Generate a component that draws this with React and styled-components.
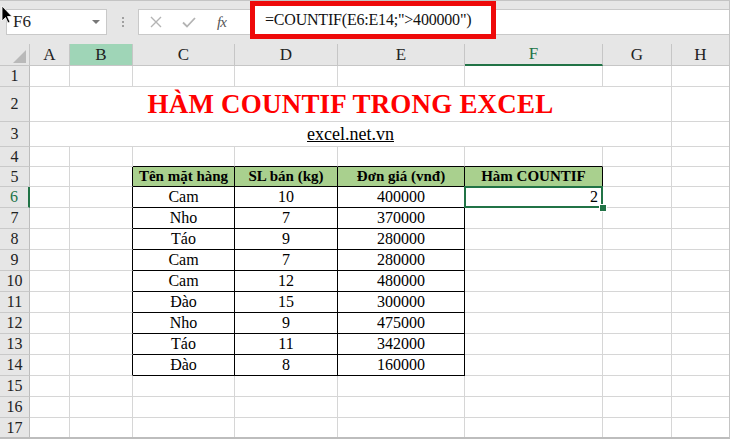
import styled, { createGlobalStyle, css } from 'styled-components';

const serif = '"Liberation Serif", "Times New Roman", "DejaVu Serif", serif';

const GlobalStyle = createGlobalStyle`
  html, body {
    margin: 0;
    padding: 0;
    background: #ffffff;
    overflow: hidden;
  }
  body, #root, #root * {
    font-family: ${serif};
  }
`;

const Window = styled.div`
  position: relative;
  width: 730px;
  height: 439px;
  overflow: hidden;
  box-sizing: border-box;
  border-top: 1px solid #c4c4c4;
  border-right: 1px solid #c4c4c4;
  border-bottom: 2px solid #bdbdbd;
  background: #ffffff;
  font-family: ${serif};
`;

const Toolbar = styled.div`
  height: 43px;
  background: #e6e6e6;
  display: flex;
  align-items: flex-start;
  padding-top: 8px;
  box-sizing: border-box;
`;

const NameBox = styled.div`
  margin-left: 6px;
  width: 101px;
  height: 26px;
  box-sizing: border-box;
  background: #fff;
  border: 1px solid #c9c9c9;
  display: flex;
  align-items: center;
  justify-content: space-between;
  padding: 0 6px 0 6px;
  font-family: ${serif};
  font-size: 17px;
  color: #222;
`;

const DropArrow = styled.span`
  width: 0;
  height: 0;
  border-left: 4px solid transparent;
  border-right: 4px solid transparent;
  border-top: 4px solid #777;
`;

const Dots = styled.div`
  width: 31px;
  height: 26px;
  display: flex;
  flex-direction: column;
  align-items: center;
  justify-content: center;
  gap: 2px;

  span {
    width: 2px;
    height: 2px;
    background: #a0a0a0;
  }
`;

const FormulaBar = styled.div`
  flex: 1;
  height: 26px;
  box-sizing: border-box;
  background: #fff;
  border: 1px solid #c9c9c9;
  border-right: none;
  display: flex;
  align-items: center;
`;

const IconButton = styled.span`
  width: 33px;
  display: flex;
  justify-content: center;
  align-items: center;
  color: ${(p) => p.$color || '#b4b4b4'};
`;

const Fx = styled.span`
  font-style: italic;
  font-size: 15px;
  color: #555;
  font-family: ${serif};
  letter-spacing: -1px;
`;

const Highlight = styled.div`
  margin-left: 12px;
  margin-top: -4px;
  width: 246px;
  height: 38px;
  box-sizing: border-box;
  border: 5px solid #ee0a0a;
  background: #fff;
  display: flex;
  align-items: center;
  padding-left: 10px;
  font-family: ${serif};
  font-size: 16px;
  letter-spacing: -0.2px;
  color: #111;
  white-space: nowrap;
`;

const Sheet = styled.div`
  display: grid;
  grid-template-columns: 30px 40px 63px 102px 103px 127px 138px 69px 58px;
  grid-template-rows: 22px 21px 35px 25px 20px 20px repeat(12, 21px);
`;

const Corner = styled.div`
  background: #e6e6e6;
  border-right: 1px solid #c6c6c6;
  border-bottom: 1px solid #c6c6c6;
  display: flex;
  align-items: flex-end;
  justify-content: flex-end;
  padding: 0 3px 2px 0;

  span {
    width: 0;
    height: 0;
    border-left: 13px solid transparent;
    border-bottom: 13px solid #b9b9b9;
  }
`;

const ColHead = styled.div`
  background: ${(p) => (p.$marked ? '#9fd5b7' : '#e6e6e6')};
  border-right: 1px solid #c6c6c6;
  border-bottom: ${(p) => (p.$active ? '2px solid #217346' : '1px solid #c6c6c6')};
  color: ${(p) => (p.$active ? '#217346' : '#222')};
  font-family: ${serif};
  font-size: 17px;
  display: flex;
  align-items: center;
  justify-content: center;
  box-sizing: border-box;
`;

const RowHead = styled.div`
  background: #e6e6e6;
  border-right: ${(p) => (p.$active ? '2px solid #217346' : '1px solid #bdbdbd')};
  border-bottom: 1px solid #c9c9c9;
  color: ${(p) => (p.$active ? '#217346' : '#222')};
  font-family: ${serif};
  font-size: 16px;
  display: flex;
  align-items: center;
  justify-content: center;
  box-sizing: border-box;
`;

const Cell = styled.div`
  position: relative;
  box-sizing: border-box;
  border-right: 1px solid ${(p) => (p.$rightDark ? '#000' : '#d6d6d6')};
  border-bottom: 1px solid ${(p) => (p.$bottomDark ? '#000' : '#d6d6d6')};
  background: ${(p) => (p.$head ? '#a9d08e' : '#fff')};
  font-family: ${serif};
  font-size: ${(p) => (p.$head ? '15px' : '16px')};
  font-weight: ${(p) => (p.$head ? 'bold' : 'normal')};
  color: #000;
  display: flex;
  align-items: center;
  justify-content: ${(p) => p.$align || 'center'};
  padding: 0 4px;
  white-space: nowrap;
  grid-column: ${(p) => p.$span || 'auto'};

  ${(p) =>
    p.$selected &&
    css`
      &::after {
        content: '';
        position: absolute;
        left: -1px;
        top: -1px;
        right: -1px;
        bottom: -1px;
        border: 2px solid #217346;
      }
    `}
`;

const FillHandle = styled.span`
  position: absolute;
  right: -5px;
  bottom: -5px;
  width: 6px;
  height: 6px;
  background: #217346;
  border: 1px solid #fff;
  z-index: 2;
`;

const Title = styled.span`
  color: #ff0000;
  font-family: ${serif};
  font-weight: bold;
  font-size: 27px;
  letter-spacing: 0.2px;
`;

const Link = styled.span`
  font-family: ${serif};
  font-size: 18px;
  text-decoration: underline;
  color: #000;
`;

const Cursor = styled.svg`
  position: absolute;
  left: 1px;
  top: 4px;
`;

const columns = ['A', 'B', 'C', 'D', 'E', 'F', 'G', 'H'];

const items = [
  ['Cam', '10', '400000'],
  ['Nho', '7', '370000'],
  ['Táo', '9', '280000'],
  ['Cam', '7', '280000'],
  ['Cam', '12', '480000'],
  ['Đào', '15', '300000'],
  ['Nho', '9', '475000'],
  ['Táo', '11', '342000'],
  ['Đào', '8', '160000'],
];

const headers = ['Tên mặt hàng', 'SL bán (kg)', 'Đơn giá (vnđ)', 'Hàm COUNTIF'];

const inTable = (r, c) => (r >= 5 && r <= 14 && c >= 2 && c <= 4) || (r === 5 && c === 5);

const cellValue = (r, c) => {
  if (r === 5 && c >= 2 && c <= 5) return headers[c - 2];
  if (r >= 6 && r <= 14 && c >= 2 && c <= 4) return items[r - 6][c - 2];
  if (r === 6 && c === 5) return '2';
  return '';
};

function SheetRow({ r }) {
  const cells = [];
  if (r === 2 || r === 3) {
    cells.push(
      <Cell key="m" $span="span 7">
        {r === 2 ? <Title>HÀM COUNTIF TRONG EXCEL</Title> : <Link>excel.net.vn</Link>}
      </Cell>
    );
    cells.push(<Cell key="h" />);
  } else {
    columns.forEach((col, c) => {
      const selected = r === 6 && c === 5;
      cells.push(
        <Cell
          key={col}
          $rightDark={inTable(r, c) || inTable(r, c + 1)}
          $bottomDark={inTable(r, c) || inTable(r + 1, c)}
          $head={r === 5 && inTable(r, c)}
          $align={selected ? 'flex-end' : 'center'}
          $selected={selected}
        >
          {cellValue(r, c)}
          {selected && <FillHandle />}
        </Cell>
      );
    });
  }
  return (
    <>
      <RowHead $active={r === 6}>{r}</RowHead>
      {cells}
    </>
  );
}

export default function App() {
  const rows = Array.from({ length: 17 }, (_, i) => i + 1);
  return (
    <Window>
      <GlobalStyle />
      <Toolbar>
        <NameBox>
          F6
          <DropArrow />
        </NameBox>
        <Dots>
          <span />
          <span />
          <span />
        </Dots>
        <FormulaBar>
          <IconButton>
            <svg width="12" height="12" viewBox="0 0 12 12">
              <path d="M1 1 L11 11 M11 1 L1 11" stroke="currentColor" strokeWidth="1.4" fill="none" />
            </svg>
          </IconButton>
          <IconButton>
            <svg width="14" height="11" viewBox="0 0 14 11">
              <path d="M1 5.5 L5 9.5 L13 1" stroke="currentColor" strokeWidth="1.8" fill="none" />
            </svg>
          </IconButton>
          <IconButton>
            <Fx>fx</Fx>
          </IconButton>
          <Highlight>=COUNTIF(E6:E14;"&gt;400000")</Highlight>
        </FormulaBar>
      </Toolbar>
      <Sheet>
        <Corner>
          <span />
        </Corner>
        {columns.map((col) => (
          <ColHead key={col} $marked={col === 'B'} $active={col === 'F'}>
            {col}
          </ColHead>
        ))}
        {rows.map((r) => (
          <SheetRow key={r} r={r} />
        ))}
      </Sheet>
      <Cursor width="12" height="19" viewBox="0 0 12 19">
        <path d="M1 1 L1 16 L4.5 12.5 L7 18 L9 17 L6.5 11.5 L11 11.5 Z" fill="#000" stroke="#fff" strokeWidth="0.8" />
      </Cursor>
    </Window>
  );
}
